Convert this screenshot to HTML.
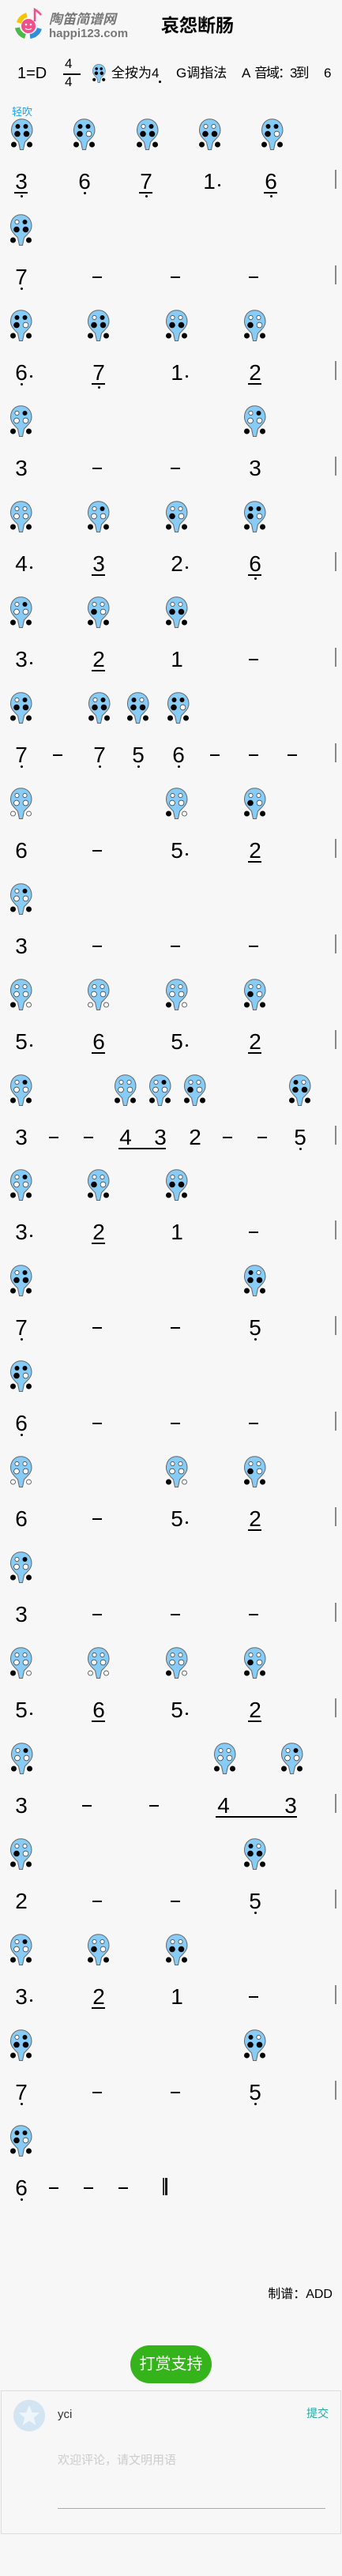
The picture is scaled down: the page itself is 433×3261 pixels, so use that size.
<!DOCTYPE html>
<html><head><meta charset="utf-8">
<style>
*{margin:0;padding:0;box-sizing:border-box}
html,body{width:433px;height:3261px;background:#f7f7f7;overflow:hidden}
body{position:relative;font-family:"Liberation Sans","Noto Sans CJK SC",sans-serif;color:#000}
.abs{position:absolute;white-space:nowrap}
.r{position:absolute;left:0;width:433px;height:110px}
.i{position:absolute;top:0;width:28px;height:40px}
.n{position:absolute;top:64px;width:30px;height:32px;line-height:32px;text-align:center;font-size:28px;margin-left:-15px;font-weight:normal}
.u::after{content:"";position:absolute;left:6px;width:17px;top:29px;height:1.5px;background:#000}
.l::before{content:"";position:absolute;left:14px;top:29px;width:3px;height:3px;border-radius:50%;background:#000}
.u.l::before{top:33px}
.a{position:absolute;top:83px;width:2.5px;height:2.5px;border-radius:50%;background:#000}
.m{position:absolute;top:79px;width:12px;height:2px;background:#000;margin-left:-6px}
.bar{position:absolute;left:424px;top:65px;width:2px;height:24px;background:#888}
.ul{position:absolute;top:93px;height:1.5px;background:#000}
</style></head><body>
<svg width="0" height="0" style="position:absolute">
<defs>
<path id="b" d="M13.5 0.7C21.5 0.7 27 7 27 15C27 22 21 26 17.5 30L15.5 39.5L11.5 39.5L9.5 30C6 26 0.5 22 0.5 15C0.5 7 5.5 0.7 13.5 0.7Z" fill="#87cbf7" stroke="#666" stroke-width="1"/>
<g id="tl1"><circle cx="8.5" cy="10" r="3"/></g>
<g id="tl0"><circle cx="8.5" cy="10" r="2.6" fill="#fff" stroke="#333" stroke-width=".7"/></g>
<g id="tr1"><circle cx="18.5" cy="10" r="3"/></g>
<g id="tr0"><circle cx="18.5" cy="10" r="2.6" fill="#fff" stroke="#333" stroke-width=".7"/></g>
<g id="ml1"><circle cx="8" cy="19.5" r="3.8"/></g>
<g id="ml0"><circle cx="8" cy="19.5" r="3.4" fill="#fff" stroke="#333" stroke-width=".7"/></g>
<g id="mr1"><circle cx="19.5" cy="19.5" r="3.8"/></g>
<g id="mr0"><circle cx="19.5" cy="19.5" r="3.4" fill="#fff" stroke="#333" stroke-width=".7"/></g>
<g id="bl1"><circle cx="3.5" cy="33" r="3.5"/></g>
<g id="bl0"><circle cx="3.5" cy="33" r="3" fill="#fff" stroke="#333" stroke-width=".7"/></g>
<g id="br1"><circle cx="23.5" cy="33" r="3.5"/></g>
<g id="br0"><circle cx="23.5" cy="33" r="3" fill="#fff" stroke="#333" stroke-width=".7"/></g>
<symbol id="A" viewBox="0 0 28 40"><use href="#b"/><use href="#tl1"/><use href="#tr1"/><use href="#ml1"/><use href="#mr1"/><use href="#bl1"/><use href="#br1"/></symbol>
<symbol id="B" viewBox="0 0 28 40"><use href="#b"/><use href="#tl1"/><use href="#tr1"/><use href="#ml1"/><use href="#mr0"/><use href="#bl1"/><use href="#br1"/></symbol>
<symbol id="C" viewBox="0 0 28 40"><use href="#b"/><use href="#tl0"/><use href="#tr1"/><use href="#ml1"/><use href="#mr1"/><use href="#bl1"/><use href="#br1"/></symbol>
<symbol id="D" viewBox="0 0 28 40"><use href="#b"/><use href="#tl0"/><use href="#tr0"/><use href="#ml1"/><use href="#mr1"/><use href="#bl1"/><use href="#br1"/></symbol>
<symbol id="E" viewBox="0 0 28 40"><use href="#b"/><use href="#tl0"/><use href="#tr0"/><use href="#ml1"/><use href="#mr0"/><use href="#bl1"/><use href="#br1"/></symbol>
<symbol id="F" viewBox="0 0 28 40"><use href="#b"/><use href="#tl0"/><use href="#tr1"/><use href="#ml0"/><use href="#mr0"/><use href="#bl1"/><use href="#br1"/></symbol>
<symbol id="G" viewBox="0 0 28 40"><use href="#b"/><use href="#tl0"/><use href="#tr0"/><use href="#ml0"/><use href="#mr0"/><use href="#bl1"/><use href="#br1"/></symbol>
<symbol id="H" viewBox="0 0 28 40"><use href="#b"/><use href="#tl1"/><use href="#tr0"/><use href="#ml1"/><use href="#mr1"/><use href="#bl1"/><use href="#br1"/></symbol>
<symbol id="I" viewBox="0 0 28 40"><use href="#b"/><use href="#tl0"/><use href="#tr0"/><use href="#ml0"/><use href="#mr0"/><use href="#bl0"/><use href="#br0"/></symbol>
<symbol id="J" viewBox="0 0 28 40"><use href="#b"/><use href="#tl0"/><use href="#tr0"/><use href="#ml0"/><use href="#mr0"/><use href="#bl1"/><use href="#br0"/></symbol>
</defs></svg>

<!-- header -->
<svg class="abs" style="left:18px;top:9px" width="38" height="44" viewBox="0 0 38 44">
<path d="M6 20 A14 14 0 0 1 16 10" stroke="#f5c400" stroke-width="6" fill="none"/>
<path d="M4 26 A14 14 0 0 0 14 37" stroke="#4cb848" stroke-width="6" fill="none"/>
<path d="M20 37 A14 14 0 0 0 32 27" stroke="#2f8fd8" stroke-width="6" fill="none"/>
<circle cx="18" cy="24" r="9" fill="#f0508a"/>
<circle cx="15" cy="22" r="1.3" fill="#fff"/><circle cx="21" cy="22" r="1.3" fill="#fff"/>
<path d="M14 27 Q18 30 22 27" stroke="#fff" stroke-width="1.3" fill="none"/>
<path d="M26 18 L26 3 Q31 6 34 10" stroke="#f0508a" stroke-width="2.5" fill="none"/>
</svg>
<div class="abs" style="left:62px;top:15px;font-size:17px;font-style:italic;font-weight:bold;color:#777;line-height:20px">陶笛简谱网</div>
<div class="abs" style="left:62px;top:34px;font-size:15px;font-weight:bold;color:#777;line-height:18px">happi123.com</div>
<div class="abs" style="left:204px;top:17px;font-size:23px;font-weight:bold;line-height:30px">哀怨断肠</div>

<div class="abs" style="left:22px;top:81px;font-size:20px;line-height:24px">1=D</div>
<div class="abs" style="left:82px;top:71px;font-size:17px;line-height:20px">4</div>
<div class="abs" style="left:80px;top:93px;width:22px;height:1.5px;background:#000"></div>
<div class="abs" style="left:82px;top:94px;font-size:17px;line-height:20px">4</div>
<svg class="abs" style="left:117px;top:81px" width="17" height="24"><use href="#A" width="17" height="24"/></svg>
<div class="abs" style="left:141px;top:82px;font-size:17px;line-height:22px">全按为4</div>
<div class="abs" style="left:201px;top:102px;width:2.5px;height:2.5px;border-radius:50%;background:#000"></div>
<div class="abs" style="left:223px;top:82px;font-size:17px;line-height:22px">G调指法</div>
<div class="abs" style="left:306px;top:82px;font-size:17px;line-height:22px">A</div>
<div class="abs" style="left:322px;top:82px;font-size:17px;line-height:22px;letter-spacing:-2px">音域：3到</div>
<div class="abs" style="left:410px;top:82px;font-size:17px;line-height:22px">6</div>
<div class="abs" style="left:15px;top:133px;font-size:13px;color:#1aa3f0;line-height:18px">轻吹</div>

<!-- R1 -->
<div class="r" style="top:150px">
<svg class="i" style="left:14px"><use href="#A"/></svg><svg class="i" style="left:93px"><use href="#B"/></svg><svg class="i" style="left:173px"><use href="#C"/></svg><svg class="i" style="left:252px"><use href="#D"/></svg><svg class="i" style="left:331px"><use href="#B"/></svg>
<b class="n u l" style="left:27px">3</b><b class="n l" style="left:107px">6</b><b class="n u l" style="left:185px">7</b><b class="n" style="left:265px">1</b><div class="a" style="left:276px"></div><b class="n u l" style="left:343px">6</b><div class="bar"></div>
</div>
<!-- R2 -->
<div class="r" style="top:271px">
<svg class="i" style="left:13px"><use href="#C"/></svg>
<b class="n l" style="left:27px">7</b><div class="m" style="left:123px"></div><div class="m" style="left:222px"></div><div class="m" style="left:321px"></div><div class="bar"></div>
</div>
<!-- R3 -->
<div class="r" style="top:392px">
<svg class="i" style="left:13px"><use href="#B"/></svg><svg class="i" style="left:111px"><use href="#C"/></svg><svg class="i" style="left:210px"><use href="#D"/></svg><svg class="i" style="left:309px"><use href="#E"/></svg>
<b class="n l" style="left:27px">6</b><div class="a" style="left:38px"></div><b class="n u l" style="left:125px">7</b><b class="n" style="left:224px">1</b><div class="a" style="left:235px"></div><b class="n u" style="left:323px">2</b><div class="bar"></div>
</div>
<!-- R4 -->
<div class="r" style="top:513px">
<svg class="i" style="left:13px"><use href="#F"/></svg><svg class="i" style="left:309px"><use href="#F"/></svg>
<b class="n" style="left:27px">3</b><div class="m" style="left:123px"></div><div class="m" style="left:222px"></div><b class="n" style="left:323px">3</b><div class="bar"></div>
</div>
<!-- R5 -->
<div class="r" style="top:634px">
<svg class="i" style="left:13px"><use href="#G"/></svg><svg class="i" style="left:111px"><use href="#F"/></svg><svg class="i" style="left:210px"><use href="#E"/></svg><svg class="i" style="left:309px"><use href="#B"/></svg>
<b class="n" style="left:27px">4</b><div class="a" style="left:38px"></div><b class="n u" style="left:125px">3</b><b class="n" style="left:224px">2</b><div class="a" style="left:235px"></div><b class="n u l" style="left:323px">6</b><div class="bar"></div>
</div>
<!-- R6 -->
<div class="r" style="top:755px">
<svg class="i" style="left:13px"><use href="#F"/></svg><svg class="i" style="left:111px"><use href="#E"/></svg><svg class="i" style="left:210px"><use href="#D"/></svg>
<b class="n" style="left:27px">3</b><div class="a" style="left:38px"></div><b class="n u" style="left:125px">2</b><b class="n" style="left:224px">1</b><div class="m" style="left:321px"></div><div class="bar"></div>
</div>
<!-- R7 -->
<div class="r" style="top:876px">
<svg class="i" style="left:13px"><use href="#C"/></svg><svg class="i" style="left:112px"><use href="#C"/></svg><svg class="i" style="left:161px"><use href="#H"/></svg><svg class="i" style="left:212px"><use href="#B"/></svg>
<b class="n l" style="left:27px">7</b><div class="m" style="left:73px"></div><b class="n l" style="left:126px">7</b><b class="n l" style="left:175px">5</b><b class="n l" style="left:226px">6</b><div class="m" style="left:272px"></div><div class="m" style="left:321px"></div><div class="m" style="left:370px"></div><div class="bar"></div>
</div>
<!-- R8 -->
<div class="r" style="top:997px">
<svg class="i" style="left:13px"><use href="#I"/></svg><svg class="i" style="left:210px"><use href="#J"/></svg><svg class="i" style="left:309px"><use href="#E"/></svg>
<b class="n" style="left:27px">6</b><div class="m" style="left:123px"></div><b class="n" style="left:224px">5</b><div class="a" style="left:235px"></div><b class="n u" style="left:323px">2</b><div class="bar"></div>
</div>
<!-- R9 -->
<div class="r" style="top:1118px">
<svg class="i" style="left:13px"><use href="#F"/></svg>
<b class="n" style="left:27px">3</b><div class="m" style="left:123px"></div><div class="m" style="left:222px"></div><div class="m" style="left:321px"></div><div class="bar"></div>
</div>
<!-- R10 -->
<div class="r" style="top:1239px">
<svg class="i" style="left:13px"><use href="#J"/></svg><svg class="i" style="left:111px"><use href="#I"/></svg><svg class="i" style="left:210px"><use href="#J"/></svg><svg class="i" style="left:309px"><use href="#E"/></svg>
<b class="n" style="left:27px">5</b><div class="a" style="left:38px"></div><b class="n u" style="left:125px">6</b><b class="n" style="left:224px">5</b><div class="a" style="left:235px"></div><b class="n u" style="left:323px">2</b><div class="bar"></div>
</div>
<!-- R11 -->
<div class="r" style="top:1360px">
<svg class="i" style="left:13px"><use href="#F"/></svg><svg class="i" style="left:145px"><use href="#G"/></svg><svg class="i" style="left:189px"><use href="#F"/></svg><svg class="i" style="left:233px"><use href="#E"/></svg><svg class="i" style="left:366px"><use href="#H"/></svg>
<b class="n" style="left:27px">3</b><div class="m" style="left:68px"></div><div class="m" style="left:112px"></div><b class="n" style="left:159px">4</b><b class="n" style="left:203px">3</b><div class="ul" style="left:150px;width:60px"></div><b class="n" style="left:247px">2</b><div class="m" style="left:288px"></div><div class="m" style="left:332px"></div><b class="n l" style="left:380px">5</b><div class="bar"></div>
</div>
<!-- R12 -->
<div class="r" style="top:1480px">
<svg class="i" style="left:13px"><use href="#F"/></svg><svg class="i" style="left:111px"><use href="#E"/></svg><svg class="i" style="left:210px"><use href="#D"/></svg>
<b class="n" style="left:27px">3</b><div class="a" style="left:38px"></div><b class="n u" style="left:125px">2</b><b class="n" style="left:224px">1</b><div class="m" style="left:321px"></div><div class="bar"></div>
</div>
<!-- R13 -->
<div class="r" style="top:1601px">
<svg class="i" style="left:13px"><use href="#C"/></svg><svg class="i" style="left:309px"><use href="#H"/></svg>
<b class="n l" style="left:27px">7</b><div class="m" style="left:123px"></div><div class="m" style="left:222px"></div><b class="n l" style="left:323px">5</b><div class="bar"></div>
</div>
<!-- R14 -->
<div class="r" style="top:1722px">
<svg class="i" style="left:13px"><use href="#B"/></svg>
<b class="n l" style="left:27px">6</b><div class="m" style="left:123px"></div><div class="m" style="left:222px"></div><div class="m" style="left:321px"></div><div class="bar"></div>
</div>
<!-- R15 -->
<div class="r" style="top:1843px">
<svg class="i" style="left:13px"><use href="#I"/></svg><svg class="i" style="left:210px"><use href="#J"/></svg><svg class="i" style="left:309px"><use href="#E"/></svg>
<b class="n" style="left:27px">6</b><div class="m" style="left:123px"></div><b class="n" style="left:224px">5</b><div class="a" style="left:235px"></div><b class="n u" style="left:323px">2</b><div class="bar"></div>
</div>
<!-- R16 -->
<div class="r" style="top:1964px">
<svg class="i" style="left:13px"><use href="#F"/></svg>
<b class="n" style="left:27px">3</b><div class="m" style="left:123px"></div><div class="m" style="left:222px"></div><div class="m" style="left:321px"></div><div class="bar"></div>
</div>
<!-- R17 -->
<div class="r" style="top:2085px">
<svg class="i" style="left:13px"><use href="#J"/></svg><svg class="i" style="left:111px"><use href="#I"/></svg><svg class="i" style="left:210px"><use href="#J"/></svg><svg class="i" style="left:309px"><use href="#E"/></svg>
<b class="n" style="left:27px">5</b><div class="a" style="left:38px"></div><b class="n u" style="left:125px">6</b><b class="n" style="left:224px">5</b><div class="a" style="left:235px"></div><b class="n u" style="left:323px">2</b><div class="bar"></div>
</div>
<!-- R18 -->
<div class="r" style="top:2206px">
<svg class="i" style="left:14px"><use href="#F"/></svg><svg class="i" style="left:271px"><use href="#G"/></svg><svg class="i" style="left:356px"><use href="#F"/></svg>
<b class="n" style="left:27px">3</b><div class="m" style="left:110px"></div><div class="m" style="left:195px"></div><b class="n" style="left:283px">4</b><b class="n" style="left:368px">3</b><div class="ul" style="left:273px;width:103px"></div><div class="bar"></div>
</div>
<!-- R19 -->
<div class="r" style="top:2327px">
<svg class="i" style="left:13px"><use href="#E"/></svg><svg class="i" style="left:309px"><use href="#H"/></svg>
<b class="n" style="left:27px">2</b><div class="m" style="left:123px"></div><div class="m" style="left:222px"></div><b class="n l" style="left:323px">5</b><div class="bar"></div>
</div>
<!-- R20 -->
<div class="r" style="top:2448px">
<svg class="i" style="left:13px"><use href="#F"/></svg><svg class="i" style="left:111px"><use href="#E"/></svg><svg class="i" style="left:210px"><use href="#D"/></svg>
<b class="n" style="left:27px">3</b><div class="a" style="left:38px"></div><b class="n u" style="left:125px">2</b><b class="n" style="left:224px">1</b><div class="m" style="left:321px"></div><div class="bar"></div>
</div>
<!-- R21 -->
<div class="r" style="top:2569px">
<svg class="i" style="left:13px"><use href="#C"/></svg><svg class="i" style="left:309px"><use href="#H"/></svg>
<b class="n l" style="left:27px">7</b><div class="m" style="left:123px"></div><div class="m" style="left:222px"></div><b class="n l" style="left:323px">5</b><div class="bar"></div>
</div>
<!-- R22 -->
<div class="r" style="top:2690px">
<svg class="i" style="left:13px"><use href="#B"/></svg>
<b class="n l" style="left:27px">6</b><div class="m" style="left:68px"></div><div class="m" style="left:112px"></div><div class="m" style="left:156px"></div>
<div class="abs" style="left:206px;top:67px;width:2px;height:22px;background:#333"></div><div class="abs" style="left:209px;top:67px;width:3px;height:22px;background:#111"></div>
</div>

<!-- footer -->
<div class="abs" style="right:12px;top:2893px;font-size:16px;line-height:24px">制谱：ADD</div>
<div class="abs" style="left:165px;top:2969px;width:103px;height:48px;border-radius:24px;background:#34b31a;color:#fff;font-size:20px;line-height:48px;text-align:center">打赏支持</div>
<div class="abs" style="left:1px;top:3026px;width:431px;height:182px;border:1px solid #ddd;background:#f7f7f7"></div>
<svg class="abs" style="left:16px;top:3037px" width="42" height="42" viewBox="0 0 44 44">
<circle cx="22" cy="22" r="21" fill="#d3e4f2"/>
<path d="M22 8 L26 18 L36 18 L28 25 L31 35 L22 29 L13 35 L16 25 L8 18 L18 18Z" fill="#eef5fb"/>
</svg>
<div class="abs" style="left:73px;top:3046px;font-size:15px;color:#333;line-height:22px">yci</div>
<div class="abs" style="left:388px;top:3045px;font-size:14px;color:#2aa8a0;line-height:20px">提交</div>
<div class="abs" style="left:73px;top:3104px;font-size:15px;color:#ccc;line-height:22px">欢迎评论，请文明用语</div>
<div class="abs" style="left:73px;top:3175px;width:339px;height:1px;background:#aaa"></div>
</body></html>
